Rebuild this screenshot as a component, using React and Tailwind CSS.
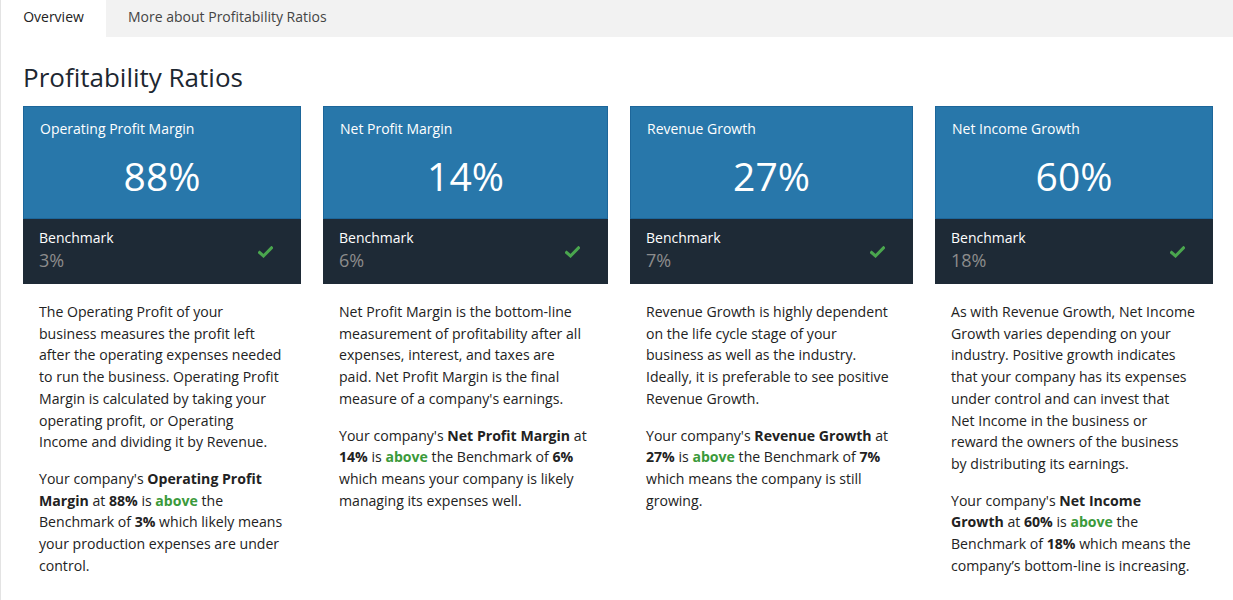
import React from "react";

const Check = () => (
  <svg width="15" height="12" viewBox="0 0 15 12" className="shrink-0">
    <path d="M1.5 6.5 L5.5 10 L13.5 1.8" fill="none" stroke="#4aa64e" strokeWidth="3" strokeLinecap="square" />
  </svg>
);

const B = ({ children }) => <span className="font-bold">{children}</span>;
const G = ({ children }) => <span className="font-bold text-[#3b9a3b]">{children}</span>;

const Lines = ({ lines }) => (
  <>
    {lines.map((l, i) => (
      <span key={i} className="block whitespace-nowrap">
        {l}
      </span>
    ))}
  </>
);

const cards = [
  {
    title: "Operating Profit Margin",
    value: "88%",
    bench: "3%",
    p1: [
      "The Operating Profit of your",
      "business measures the profit left",
      "after the operating expenses needed",
      "to run the business. Operating Profit",
      "Margin is calculated by taking your",
      "operating profit, or Operating",
      "Income and dividing it by Revenue.",
    ],
    p2: [
      <>Your company's <B>Operating Profit</B></>,
      <><B>Margin</B> at <B>88%</B> is <G>above</G> the</>,
      <>Benchmark of <B>3%</B> which likely means</>,
      "your production expenses are under",
      "control.",
    ],
  },
  {
    title: "Net Profit Margin",
    value: "14%",
    bench: "6%",
    p1: [
      "Net Profit Margin is the bottom-line",
      "measurement of profitability after all",
      "expenses, interest, and taxes are",
      "paid. Net Profit Margin is the final",
      "measure of a company's earnings.",
    ],
    p2: [
      <>Your company's <B>Net Profit Margin</B> at</>,
      <><B>14%</B> is <G>above</G> the Benchmark of <B>6%</B></>,
      "which means your company is likely",
      "managing its expenses well.",
    ],
  },
  {
    title: "Revenue Growth",
    value: "27%",
    bench: "7%",
    p1: [
      "Revenue Growth is highly dependent",
      "on the life cycle stage of your",
      "business as well as the industry.",
      "Ideally, it is preferable to see positive",
      "Revenue Growth.",
    ],
    p2: [
      <>Your company's <B>Revenue Growth</B> at</>,
      <><B>27%</B> is <G>above</G> the Benchmark of <B>7%</B></>,
      "which means the company is still",
      "growing.",
    ],
  },
  {
    title: "Net Income Growth",
    value: "60%",
    bench: "18%",
    p1: [
      "As with Revenue Growth, Net Income",
      "Growth varies depending on your",
      "industry. Positive growth indicates",
      "that your company has its expenses",
      "under control and can invest that",
      "Net Income in the business or",
      "reward the owners of the business",
      "by distributing its earnings.",
    ],
    p2: [
      <>Your company's <B>Net Income</B></>,
      <><B>Growth</B> at <B>60%</B> is <G>above</G> the</>,
      <>Benchmark of <B>18%</B> which means the</>,
      "company’s bottom-line is increasing.",
    ],
  },
];

export default function App() {
  return (
    <div className="w-[1233px] h-[600px] bg-white overflow-hidden" style={{ fontFamily: '"Open Sans", sans-serif' }}>
      <div className="flex h-[37px] bg-[#f2f2f2]">
        <div className="w-[106px] bg-white flex items-center justify-center pb-[4px] text-[14px] text-[#222] border-l border-[#e3e3e3]">Overview</div>
        <div className="flex items-center pb-[4px] pl-[22px] text-[14px] text-[#444]">More about Profitability Ratios</div>
      </div>
      <div className="border-l border-[#e3e3e3] h-[563px] pl-[22px]">
        <h1 className="text-[26px] leading-[36px] text-[#1d2731] pt-[22px] pb-[11px]">Profitability Ratios</h1>
        <div className="grid grid-cols-[278px_285px_283px_278px] gap-[22px]">
          {cards.map((c) => (
            <div key={c.title}>
              <div className="bg-[#2877aa] border border-[#1d669a] h-[113px] px-[16px] pt-[12px] text-white">
                <div className="text-[14px] leading-[20px]">{c.title}</div>
                <div className="text-[39px] leading-[50px] text-center mt-[12px]">{c.value}</div>
              </div>
              <div className="bg-[#1e2a36] h-[65px] pl-[16px] pr-[28px] pt-[9px] flex items-start justify-between">
                <div>
                  <div className="text-[14px] leading-[20px] text-white">Benchmark</div>
                  <div className="text-[18px] leading-[25px] text-[#8c8c8c]">{c.bench}</div>
                </div>
                <div className="mt-[18px]">
                  <Check />
                </div>
              </div>
              <div className="px-[16px] pt-[17px] text-[14.1px] leading-[21.7px] text-[#222]">
                <p>
                  <Lines lines={c.p1} />
                </p>
                <p className="mt-[15px]">
                  <Lines lines={c.p2} />
                </p>
              </div>
            </div>
          ))}
        </div>
      </div>
    </div>
  );
}
